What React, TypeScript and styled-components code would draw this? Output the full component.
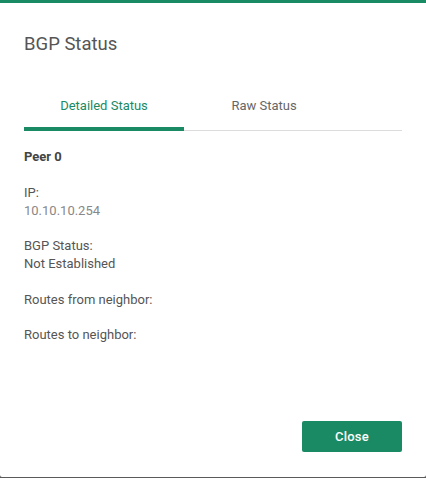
import React, { useState } from "react";
import styled, { createGlobalStyle } from "styled-components";

const Global = createGlobalStyle`
  html, body { margin: 0; padding: 0; background: #5a5a5a; }
  body { font-family: Roboto, "Noto Sans", Arial, sans-serif; }
  * { box-sizing: border-box; }
`;

const GREEN = "#1a8a64";

const Dialog = styled.div`
  width: 426px;
  height: 477px;
  background: #fff;
  border-top: 3px solid ${GREEN};
  border-radius: 0 0 2px 2px;
  display: flex;
  flex-direction: column;
  padding: 0 24px;
`;

const Title = styled.h2`
  margin: 0;
  padding-top: 29px;
  font-size: 18.5px;
  font-weight: 400;
  line-height: 24px;
  color: #555;
`;

const Tabs = styled.div`
  display: flex;
  margin-top: 27px;
  border-bottom: 1px solid #dcdcdc;
`;

const Tab = styled.button<{ $active?: boolean }>`
  width: 160px;
  height: 48px;
  padding: 0;
  border: none;
  background: none;
  font-family: inherit;
  font-size: 13px;
  color: ${(p) => (p.$active ? GREEN : "#666")};
  border-bottom: 4px solid ${(p) => (p.$active ? GREEN : "transparent")};
  margin-bottom: -1px;
  cursor: pointer;
`;

const Body = styled.div`
  padding-top: 17px;
  display: flex;
  flex-direction: column;
  gap: 17.5px;
  font-size: 13px;
  line-height: 18px;
  color: #555;
`;

const PeerName = styled.div`
  font-weight: 700;
  color: #444;
`;

const Field = styled.div`
  display: flex;
  flex-direction: column;
`;

const Value = styled.span<{ $muted?: boolean }>`
  color: ${(p) => (p.$muted ? "#888" : "#555")};
`;

const Footer = styled.div`
  margin-top: auto;
  display: flex;
  justify-content: flex-end;
  padding-bottom: 25px;
`;

const CloseButton = styled.button`
  width: 100px;
  height: 31px;
  border: none;
  border-radius: 2px;
  background: ${GREEN};
  color: #fff;
  font-family: inherit;
  font-size: 13px;
  font-weight: 500;
  letter-spacing: 0.2px;
  cursor: pointer;
`;

export default function App() {
  const [tab, setTab] = useState(0);
  return (
    <>
      <Global />
      <Dialog>
        <Title>BGP Status</Title>
        <Tabs>
          <Tab $active={tab === 0} onClick={() => setTab(0)}>Detailed Status</Tab>
          <Tab $active={tab === 1} onClick={() => setTab(1)}>Raw Status</Tab>
        </Tabs>
        <Body>
          <PeerName>Peer 0</PeerName>
          <Field>
            <span>IP:</span>
            <Value $muted>10.10.10.254</Value>
          </Field>
          <Field>
            <span>BGP Status:</span>
            <Value>Not Established</Value>
          </Field>
          <Field>
            <span>Routes from neighbor:</span>
          </Field>
          <Field>
            <span>Routes to neighbor:</span>
          </Field>
        </Body>
        <Footer>
          <CloseButton>Close</CloseButton>
        </Footer>
      </Dialog>
    </>
  );
}
